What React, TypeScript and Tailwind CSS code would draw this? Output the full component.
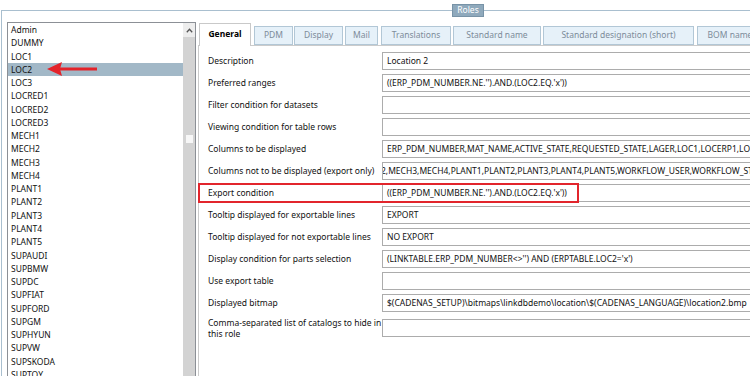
import React from "react";

const items = [
  "Admin", "DUMMY", "LOC1", "LOC2", "LOC3", "LOCRED1", "LOCRED2", "LOCRED3",
  "MECH1", "MECH2", "MECH3", "MECH4", "PLANT1", "PLANT2", "PLANT3", "PLANT4", "PLANT5",
  "SUPAUDI", "SUPBMW", "SUPDC", "SUPFIAT", "SUPFORD", "SUPGM", "SUPHYUN", "SUPVW", "SUPSKODA", "SUPTOY",
];

const tabs = [
  { name: "PDM", cls: "ml-[3px] w-[39px]" },
  { name: "Display", cls: "ml-[1px] w-[49px]" },
  { name: "Mail", cls: "ml-[2px] w-[33px]" },
  { name: "Translations", cls: "ml-[3px] w-[70px]" },
  { name: "Standard name", cls: "ml-[2px] w-[88px]" },
  { name: "Standard designation (short)", cls: "ml-[2px] w-[151px]" },
  { name: "BOM name", cls: "ml-[3px] w-[66px]" },
];

const rows: { label: string; value?: string; shift?: boolean; red?: boolean }[] = [
  { label: "Description", value: "Location 2" },
  { label: "Preferred ranges", value: "((ERP_PDM_NUMBER.NE.'').AND.(LOC2.EQ.'x'))" },
  { label: "Filter condition for datasets" },
  { label: "Viewing condition for table rows" },
  { label: "Columns to be displayed", value: "ERP_PDM_NUMBER,MAT_NAME,ACTIVE_STATE,REQUESTED_STATE,LAGER,LOC1,LOCERP1,LOC2,LOCERP2" },
  { label: "Columns not to be displayed (export only)", value: "2,MECH3,MECH4,PLANT1,PLANT2,PLANT3,PLANT4,PLANT5,WORKFLOW_USER,WORKFLOW_STATE", shift: true },
  { label: "Export condition", value: "((ERP_PDM_NUMBER.NE.'').AND.(LOC2.EQ.'x'))", red: true },
  { label: "Tooltip displayed for exportable lines", value: "EXPORT" },
  { label: "Tooltip displayed for not exportable lines", value: "NO EXPORT" },
  { label: "Display condition for parts selection", value: "(LINKTABLE.ERP_PDM_NUMBER<>'') AND (ERPTABLE.LOC2='x')" },
  { label: "Use export table" },
  { label: "Displayed bitmap", value: "$(CADENAS_SETUP)\\bitmaps\\linkdbdemo\\location\\$(CADENAS_LANGUAGE)\\location2.bmp" },
];

export default function App() {
  return (
    <div className="w-[750px] h-[376px] overflow-hidden bg-white relative font-['Noto_Sans',sans-serif] text-[8.5px] text-[#111]">
      <div className="pt-[10px] pl-[1px] h-full">
        <div className="border-t border-l border-[#a9bfcf] h-[420px] flex pl-[5px] pt-[11px]">
          {/* list box */}
          <div className="w-[189px] h-[400px] shrink-0 border border-[#8c9096] flex">
            <div className="w-[175px] flex flex-col">
              {items.map((it) => (
                <div
                  key={it}
                  className={
                    "h-[13.27px] leading-[13.27px] pl-[3px] whitespace-nowrap " +
                    (it === "LOC2" ? "bg-[#a2b8c7]" : "")
                  }
                >
                  {it}
                </div>
              ))}
            </div>
            <div className="w-[12px] bg-[#d3d3d3] flex flex-col">
              <div className="h-[14px] bg-[#ededed] flex items-center justify-center">
                <svg width="7" height="5" viewBox="0 0 7 5">
                  <path d="M0.8 4.2 L3.5 1.3 L6.2 4.2" fill="none" stroke="#555" strokeWidth="1.3" />
                </svg>
              </div>
              <div className="mt-[98px] mx-auto w-[7px] h-[8px] bg-[#f7f7f7]" />
            </div>
          </div>

          {/* tab control */}
          <div className="ml-[2px] flex-1 flex flex-col">
            <div className="h-[22px] mt-[1px] flex items-end">
              <div className="ml-[1px] w-[52px] h-[23px] -mb-[1px] relative z-10 bg-white border-t border-l border-r border-[#c9c9c9] flex items-center justify-center pb-[2px] font-bold text-[#000]">
                General
              </div>
              {tabs.map((t) => (
                <div
                  key={t.name}
                  className={
                    t.cls +
                    " h-[19px] shrink-0 bg-[#e6f1f9] border border-[#b2c7d6] flex items-center justify-center text-[#7d8c99] whitespace-nowrap"
                  }
                >
                  {t.name}
                </div>
              ))}
            </div>
            <div className="flex-1 border-t border-l border-[#cbcbcb] pl-[9px] pt-[6px] flex flex-col">
              {rows.map((r) => (
                <div key={r.label} className="relative h-[18px] mb-[4px] flex items-center">
                  {r.red && (
                    <div className="absolute left-[-10px] top-[-1px] w-[381px] h-[20px] border-2 border-[#e2252c]" />
                  )}
                  <div className="w-[174px] shrink-0 whitespace-nowrap">{r.label}</div>
                  <div
                    className={
                      "w-[420px] h-[18px] shrink-0 border border-[#acacac] flex items-center overflow-hidden whitespace-nowrap " +
                      (r.shift ? "pl-0" : "pl-[4px]")
                    }
                  >
                    <span className={r.shift ? "-ml-[2px]" : ""}>{r.value ?? ""}</span>
                  </div>
                </div>
              ))}
              <div className="h-[23px] flex items-center">
                <div className="w-[174px] shrink-0 leading-[11px]">
                  Comma-separated list of catalogs to hide in
                  <br />
                  this role
                </div>
                <div className="w-[420px] h-[18px] shrink-0 border border-[#acacac]" />
              </div>
            </div>
          </div>
        </div>
      </div>

      {/* Roles legend */}
      <div className="absolute left-[452px] top-[4px] w-[32px] h-[13px] bg-[#8fa9bc] border border-[#7893a7] text-white flex items-center justify-center leading-none">
        Roles
      </div>

      {/* red annotation arrow */}
      <svg className="absolute left-[44px] top-[60px]" width="56" height="18" viewBox="0 0 56 18">
        <path d="M3 9 L18 2 L16 9 L18 16 Z" fill="#e3232a" />
        <rect x="15" y="7.5" width="38" height="3" fill="#e3232a" />
      </svg>
    </div>
  );
}
